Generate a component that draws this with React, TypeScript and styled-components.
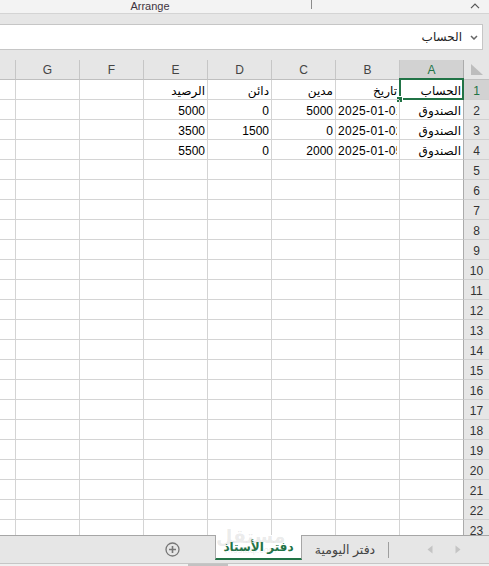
import React from 'react';
import styled, { createGlobalStyle } from 'styled-components';

const GlobalStyle = createGlobalStyle`
  html, body {
    margin: 0;
    padding: 0;
    background: #e6e6e6;
  }
  body {
    font-family: 'Liberation Sans', 'DejaVu Sans', sans-serif;
    color: #000;
  }
`;

const GREEN = '#217346';
const COLUMNS = ['A', 'B', 'C', 'D', 'E', 'F', 'G'];
const ROW_COUNT = 23;

type CellValue = { text: string; ltr?: boolean };

// ledger sheet contents, columns A..E
const rows: CellValue[][] = [
  [{ text: 'الحساب' }, { text: 'تاريخ' }, { text: 'مدين' }, { text: 'دائن' }, { text: 'الرصيد' }],
  [{ text: 'الصندوق' }, { text: '2025-01-01', ltr: true }, { text: '5000' }, { text: '0' }, { text: '5000' }],
  [{ text: 'الصندوق' }, { text: '2025-01-02', ltr: true }, { text: '0' }, { text: '1500' }, { text: '3500' }],
  [{ text: 'الصندوق' }, { text: '2025-01-05', ltr: true }, { text: '2000' }, { text: '0' }, { text: '5500' }],
];

const ChevronUp = () => (
  <svg width="10" height="6" viewBox="0 0 10 6">
    <path d="M1 5.2 L5 1.2 L9 5.2" fill="none" stroke="#555" strokeWidth="1.2" />
  </svg>
);

const ChevronDown = () => (
  <svg width="8" height="5" viewBox="0 0 8 5">
    <path d="M1 1 L4 4 L7 1" fill="none" stroke="#666" strokeWidth="1.5" />
  </svg>
);

const SelectAllMark = () => (
  <svg width="14" height="12" viewBox="0 0 14 12">
    <path d="M1 0 L1 11 L13 11 Z" fill="#bdbdbd" />
  </svg>
);

const PlusCircle = () => (
  <svg width="15" height="15" viewBox="0 0 15 15">
    <circle cx="7.5" cy="7.5" r="6.5" fill="none" stroke="#777" strokeWidth="1.3" />
    <path d="M7.5 4 V11 M4 7.5 H11" stroke="#777" strokeWidth="1.6" />
  </svg>
);

const Arrow = ({ dir }: { dir: 'left' | 'right' }) => (
  <svg width="6" height="9" viewBox="0 0 6 9">
    {dir === 'left' ? (
      <path d="M5.5 0.5 L0.5 4.5 L5.5 8.5 Z" fill="#c4c4c4" />
    ) : (
      <path d="M0.5 0.5 L5.5 4.5 L0.5 8.5 Z" fill="#c4c4c4" />
    )}
  </svg>
);

export default function App() {
  return (
    <>
      <GlobalStyle />
      <Window>
        <RibbonStrip>
          <GroupLabel>Arrange</GroupLabel>
          <GroupDivider />
          <CollapseButton>
            <ChevronUp />
          </CollapseButton>
        </RibbonStrip>

        <FormulaRow>
          <NameBox>
            <DropButton>
              <ChevronDown />
            </DropButton>
            <NameText>الحساب</NameText>
          </NameBox>
        </FormulaRow>

        <Sheet>
          <Corner>
            <SelectAllMark />
          </Corner>
          {COLUMNS.map((c) => (
            <ColHeader key={c} $selected={c === 'A'}>
              {c}
            </ColHeader>
          ))}
          <ColHeader $edge />

          {Array.from({ length: ROW_COUNT }, (_, r) => (
            <React.Fragment key={r}>
              <RowHeader $selected={r === 0}>{r + 1}</RowHeader>
              {COLUMNS.map((c, ci) => {
                const value = rows[r]?.[ci];
                const active = r === 0 && ci === 0;
                return (
                  <DataCell key={c}>
                    {value && <CellText $ltr={value.ltr}>{value.text}</CellText>}
                    {active && (
                      <SelectionFrame>
                        <FillHandle />
                      </SelectionFrame>
                    )}
                  </DataCell>
                );
              })}
              <DataCell $edge />
            </React.Fragment>
          ))}
        </Sheet>

        <TabBar>
          <NavArea>
            <Arrow dir="right" />
            <Arrow dir="left" />
          </NavArea>
          <TabDivider />
          <SheetTab>دفتر اليومية</SheetTab>
          <SheetTab $active>دفتر الأستاذ</SheetTab>
          <AddSheet>
            <PlusCircle />
          </AddSheet>
        </TabBar>
        <ScrollStrip>
          <ScrollThumb />
        </ScrollStrip>

        <Watermark>
          <span>مستقل</span>
          <small>mostaql.com</small>
        </Watermark>
      </Window>
    </>
  );
}

const Window = styled.div`
  position: relative;
  width: 489px;
  height: 566px;
  overflow: hidden;
  background: #e6e6e6;
`;

const RibbonStrip = styled.div`
  display: flex;
  align-items: flex-start;
  height: 14px;
  box-sizing: border-box;
  background: #f3f3f3;
  border-bottom: 1px solid #d4d4d4;
`;

const GroupLabel = styled.div`
  width: 300px;
  text-align: center;
  font-size: 11px;
  line-height: 12px;
  color: #3f3340;
`;

const GroupDivider = styled.div`
  width: 1px;
  height: 9px;
  margin-left: 11px;
  background: #8c8c8c;
`;

const CollapseButton = styled.div`
  display: flex;
  margin-left: auto;
  margin-right: 9px;
  padding-top: 3px;
`;

const FormulaRow = styled.div`
  padding: 10px 6px 10px 0;
`;

const NameBox = styled.div`
  direction: rtl;
  display: flex;
  align-items: center;
  height: 26px;
  box-sizing: border-box;
  background: #fff;
  border: 1px solid #c6c6c6;
  border-left: none;
`;

const DropButton = styled.div`
  display: flex;
  width: 16px;
  justify-content: center;
`;

const NameText = styled.div`
  margin-right: 4px;
  font-size: 12px;
  color: #222;
`;

const Sheet = styled.div`
  direction: rtl;
  display: grid;
  grid-template-columns: 26px repeat(7, 64px) 1fr;
  grid-auto-rows: 20px;
  height: 475px;
  overflow: hidden;
  background: #fff;
  font-size: 12px;
`;

const Corner = styled.div`
  display: flex;
  align-items: flex-end;
  justify-content: center;
  padding-bottom: 3px;
  box-sizing: border-box;
  background: #e6e6e6;
  border-left: 1px solid #ababab;
  border-bottom: 1px solid #bfbfbf;
`;

const ColHeader = styled.div<{ $selected?: boolean; $edge?: boolean }>`
  display: flex;
  align-items: center;
  justify-content: center;
  box-sizing: border-box;
  background: ${({ $selected }) => ($selected ? '#d2d2d2' : '#e6e6e6')};
  color: ${({ $selected }) => ($selected ? GREEN : '#444')};
  border-left: ${({ $edge }) => ($edge ? 'none' : '1px solid #c6c6c6')};
  border-bottom: ${({ $selected }) => ($selected ? `2px solid ${GREEN}` : '1px solid #bfbfbf')};
  padding-top: ${({ $selected }) => ($selected ? '1px' : '0')};
`;

const RowHeader = styled.div<{ $selected?: boolean }>`
  display: flex;
  align-items: flex-end;
  justify-content: center;
  box-sizing: border-box;
  padding-bottom: 1px;
  line-height: 14px;
  background: ${({ $selected }) => ($selected ? '#d2d2d2' : '#e6e6e6')};
  color: ${({ $selected }) => ($selected ? GREEN : '#333')};
  border-left: 1px solid #ababab;
  border-bottom: 1px solid #d0d0d0;
`;

const DataCell = styled.div<{ $edge?: boolean }>`
  position: relative;
  display: flex;
  align-items: flex-end;
  box-sizing: border-box;
  min-width: 0;
  padding: 0 2px 1px 2px;
  border-left: ${({ $edge }) => ($edge ? 'none' : '1px solid #d4d4d4')};
  border-bottom: 1px solid #d4d4d4;
`;

const CellText = styled.div<{ $ltr?: boolean }>`
  flex: 1;
  min-width: 0;
  overflow: hidden;
  white-space: nowrap;
  line-height: 14px;
  direction: ${({ $ltr }) => ($ltr ? 'ltr' : 'rtl')};
  text-align: ${({ $ltr }) => ($ltr ? 'left' : 'right')};
  letter-spacing: ${({ $ltr }) => ($ltr ? '0.35px' : 'normal')};
`;

const SelectionFrame = styled.div`
  position: absolute;
  top: -2px;
  right: -1px;
  bottom: -1px;
  left: -1px;
  border: 2px solid ${GREEN};
  pointer-events: none;
`;

const FillHandle = styled.div`
  position: absolute;
  left: -5px;
  bottom: -5px;
  width: 5px;
  height: 5px;
  background: ${GREEN};
  border: 1px solid #fff;
`;

const TabBar = styled.div`
  direction: rtl;
  display: flex;
  align-items: stretch;
  height: 28px;
  box-sizing: border-box;
  background: #e6e6e6;
  border-top: 1px solid #a6a6a6;
  font-size: 12.5px;
`;

const NavArea = styled.div`
  display: flex;
  align-items: center;
  gap: 22px;
  width: 100px;
  box-sizing: border-box;
  padding-right: 28px;
`;

const TabDivider = styled.div`
  align-self: center;
  width: 1px;
  height: 16px;
  background: #9e9e9e;
`;

const SheetTab = styled.div<{ $active?: boolean }>`
  display: flex;
  align-items: center;
  justify-content: center;
  box-sizing: border-box;
  width: ${({ $active }) => ($active ? '87px' : '86px')};
  white-space: nowrap;
  color: ${({ $active }) => ($active ? GREEN : '#444')};
  font-weight: ${({ $active }) => ($active ? 700 : 400)};
  font-size: ${({ $active }) => ($active ? '12px' : '12.5px')};
  ${({ $active }) =>
    $active &&
    `
    align-self: flex-start;
    height: 25px;
    margin-top: -1px;
    background: #fff;
    border-left: 1px solid #a6a6a6;
    border-right: 1px solid #a6a6a6;
    border-bottom: 2px solid ${GREEN};
  `}
`;

const AddSheet = styled.div`
  display: flex;
  align-items: center;
  justify-content: center;
  width: 86px;
`;

const ScrollStrip = styled.div`
  height: 3px;
  box-sizing: border-box;
  background: #f0f0f0;
  border-top: 1px solid #c6c6c6;
`;

const ScrollThumb = styled.div`
  width: 40px;
  height: 2px;
  margin-left: 188px;
  background: #c2c2c2;
`;

const Watermark = styled.div`
  position: absolute;
  left: 216px;
  top: 528px;
  display: flex;
  flex-direction: column;
  align-items: center;
  color: rgba(110, 110, 110, 0.14);
  pointer-events: none;
  span {
    font-size: 19px;
    font-weight: 700;
    line-height: 18px;
  }
  small {
    font-size: 9px;
    line-height: 9px;
  }
`;
